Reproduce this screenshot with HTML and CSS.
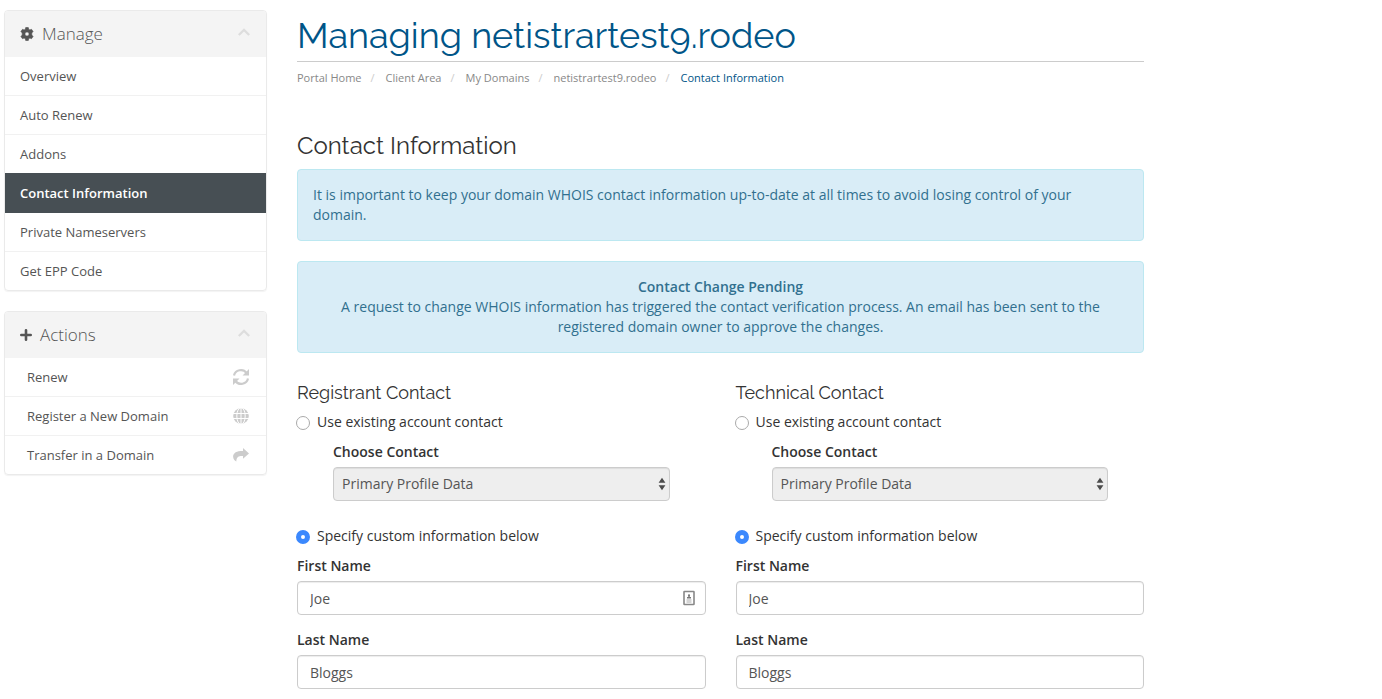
FILE: index.html
```html
<!DOCTYPE html>
<html lang="en">
<head>
<meta charset="utf-8">
<title>Managing netistrartest9.rodeo</title>
<link rel="stylesheet" href="styles.css">
</head>
<body>
<div class="page">
  <aside class="sidebar">
    <section class="panel">
      <h3 class="panel-heading">
        <svg class="panel-icon" width="14" height="14" viewBox="0 0 14 14" aria-hidden="true"><path fill="currentColor" stroke="currentColor" stroke-width=".6" stroke-linejoin="round" fill-rule="evenodd" d="M5.700 .5h2.600l.4 1.700 1.200.7 1.600-.6 1.600 2.300-1.300 1.300v2.200l1.300 1.300-1.600 2.300-1.600-.6-1.200.7-.4 1.700H5.700l-.4-1.700-1.200-.7-1.600.6L.9 9.400l1.300-1.300V5.900L.9 4.600l1.600-2.300 1.600.6 1.200-.7zM7 4.900a2.100 2.100 0 1 0 0 4.200a2.100 2.100 0 0 0 0-4.200z"/></svg>
        <span class="panel-title">Manage</span>
        <svg class="chevron" width="12" height="8" viewBox="0 0 12 8" aria-hidden="true"><path fill="none" stroke="currentColor" stroke-width="2.200" d="M.8 7L6 1.900 11.200 7"/></svg>
      </h3>
      <nav class="menu">
        <a class="item" href="#">Overview</a>
        <a class="item" href="#">Auto Renew</a>
        <a class="item" href="#">Addons</a>
        <a class="item active" href="#">Contact Information</a>
        <a class="item" href="#">Private Nameservers</a>
        <a class="item" href="#">Get EPP Code</a>
      </nav>
    </section>
    <section class="panel">
      <h3 class="panel-heading">
        <svg class="panel-icon" width="12" height="12" viewBox="0 0 12 12" aria-hidden="true"><path fill="none" stroke="currentColor" stroke-width="2.600" stroke-linecap="round" d="M6 1.300v9.400M1.300 6h9.400"/></svg>
        <span class="panel-title">Actions</span>
        <svg class="chevron" width="12" height="8" viewBox="0 0 12 8" aria-hidden="true"><path fill="none" stroke="currentColor" stroke-width="2.200" d="M.8 7L6 1.900 11.200 7"/></svg>
      </h3>
      <nav class="menu actions">
        <a class="item" href="#">Renew
          <svg width="18" height="18" viewBox="0 0 18 18" aria-hidden="true"><g fill="none" stroke="currentColor" stroke-width="2.200"><path d="M2 7.500A7 6.800 0 0 1 14.600 5M16 10.500A7 6.800 0 0 1 3.400 13"/></g><path fill="currentColor" d="M17 1v6.500h-6.500zM1 17v-6.500h6.500z"/></svg></a>
        <a class="item" href="#">Register a New Domain
          <svg width="18" height="18" viewBox="0 0 18 18" aria-hidden="true"><circle cx="9" cy="9" r="7.800" fill="currentColor"/><path fill="none" stroke="#fff" stroke-width="1" d="M1 6.500h16M1 11.500h16M9 1v16"/><ellipse cx="9" cy="9" rx="4.200" ry="8.400" fill="none" stroke="#fff"/></svg></a>
        <a class="item" href="#">Transfer in a Domain
          <svg width="18" height="18" viewBox="0 0 18 18" aria-hidden="true"><path fill="currentColor" d="M11 2l6 5.400-6 5.400V10C7.500 9.700 4.500 10.500 4.300 15.500 2.800 15 1.100 13 1.100 10.600 1.100 6.500 5 4.800 11 4.900z"/></svg></a>
      </nav>
    </section>
  </aside>

  <main class="main">
    <header class="page-header">
      <h1>Managing netistrartest9.rodeo</h1>
      <nav aria-label="Breadcrumb">
        <ol class="breadcrumb">
          <li><a href="#">Portal Home</a></li>
          <li><a href="#">Client Area</a></li>
          <li><a href="#">My Domains</a></li>
          <li><a href="#">netistrartest9.rodeo</a></li>
          <li class="current">Contact Information</li>
        </ol>
      </nav>
    </header>

    <h2>Contact Information</h2>
    <p class="alert">It is important to keep your domain WHOIS contact information up-to-date at all times to avoid losing control of your domain.</p>
    <p class="alert centered"><strong>Contact Change Pending</strong><br>A request to change WHOIS information has triggered the contact verification process. An email has been sent to the registered domain owner to approve the changes.</p>

    <form class="contacts">
      <section class="contact">
        <h3>Registrant Contact</h3>
        <label class="choice"><input type="radio" name="registrant"> Use existing account contact</label>
        <div class="field existing">
          <label for="r-contact">Choose Contact</label>
          <div class="control">
            <select id="r-contact" disabled><option>Primary Profile Data</option></select>
            <svg class="arrows" width="8" height="14" viewBox="0 0 8 14" aria-hidden="true"><path fill="#4c4c4c" d="M4 .8l3.400 5H.6zM4 13.200l3.400-5H.6z"/></svg>
          </div>
        </div>
        <label class="choice"><input type="radio" name="registrant" checked> Specify custom information below</label>
        <div class="field">
          <label for="r-first">First Name</label>
          <div class="control">
            <input class="text" id="r-first" type="text" value="Joe">
            <svg class="card" width="12" height="16" viewBox="0 0 12 16" aria-hidden="true"><rect x="1" y="1.500" width="10" height="13" rx=".5" fill="#fff" stroke="#888" stroke-width="1.600"/><circle cx="6" cy="5.300" r="1.100" fill="#777"/><path fill="#777" d="M5.300 6h1.400v1H8v1.500H4V7h1.300z"/><path stroke="#aaa" d="M3.500 10h5M3.500 12h5"/></svg>
          </div>
        </div>
        <div class="field">
          <label for="r-last">Last Name</label>
          <input class="text" id="r-last" type="text" value="Bloggs">
        </div>
      </section>
      <section class="contact">
        <h3>Technical Contact</h3>
        <label class="choice"><input type="radio" name="technical"> Use existing account contact</label>
        <div class="field existing">
          <label for="t-contact">Choose Contact</label>
          <div class="control">
            <select id="t-contact" disabled><option>Primary Profile Data</option></select>
            <svg class="arrows" width="8" height="14" viewBox="0 0 8 14" aria-hidden="true"><path fill="#4c4c4c" d="M4 .8l3.400 5H.6zM4 13.200l3.400-5H.6z"/></svg>
          </div>
        </div>
        <label class="choice"><input type="radio" name="technical" checked> Specify custom information below</label>
        <div class="field">
          <label for="t-first">First Name</label>
          <input class="text" id="t-first" type="text" value="Joe">
        </div>
        <div class="field">
          <label for="t-last">Last Name</label>
          <input class="text" id="t-last" type="text" value="Bloggs">
        </div>
      </section>
    </form>
  </main>
</div>
</body>
</html>
```
FILE: styles.css
```css
* { box-sizing: border-box; }

body {
  margin: 0;
  background: #fff;
  color: #333;
  font: 14px/20px "Open Sans", "Noto Sans", sans-serif;
}

a { color: inherit; text-decoration: none; }

h1, h2, h3, p, ol { margin: 0; padding: 0; }

h1, h2, .contact h3 {
  font-family: Raleway, Lato, sans-serif;
  font-weight: 400;
}

.page {
  display: flex;
  gap: 30px;
  max-width: 1148px;
  padding: 10px 4px;
}

/* Sidebar */
.sidebar {
  display: flex;
  flex: 0 0 263px;
  flex-direction: column;
  gap: 20px;
}

.panel {
  overflow: hidden;
  border: 1px solid #eaeaea;
  border-radius: 4px;
  box-shadow: 0 1px 1px rgba(0, 0, 0, .05);
  color: #555;
}

.panel-heading {
  display: flex;
  align-items: center;
  height: 46px;
  padding: 0 16px 0 15px;
  background: #f4f4f4;
  font-size: 17px;
  font-weight: 300;
}

.panel-icon { margin-right: 8px; }
.panel-title { flex: 1; }
.chevron { color: #ddd; margin-bottom: 4px; }

.item {
  display: flex;
  align-items: center;
  justify-content: space-between;
  height: 39px;
  padding: 0 15px;
  border-bottom: 1px solid #f1f1f1;
  font-size: 13px;
}

.item:last-child { border-bottom: 0; height: 38px; }

.item.active {
  height: 40px;
  margin-top: -1px;
  border-color: #474f54;
  background: #474f54;
  color: #fff;
  font-weight: 600;
}

.actions .item { padding: 0 16px 0 22px; }
.actions svg { color: #ccc; }

/* Page header */
.page-header { padding-bottom: 44px; }

h1 {
  height: 52px;
  border-bottom: 1px solid #ccc;
  color: #058;
  font-size: 36px;
  line-height: 50px;
}

.breadcrumb {
  display: flex;
  padding-top: 6px;
  color: #888;
  font-size: 11px;
  list-style: none;
}

.breadcrumb li + li::before {
  padding: 0 11px 0 9px;
  color: #ccc;
  content: "/";
}

.breadcrumb .current { color: #058; }

.main { flex: 1; min-width: 0; }

h2 {
  margin-bottom: 10px;
  font-size: 24px;
  line-height: 27px;
}

.alert {
  margin-bottom: 20px;
  padding: 15px;
  border: 1px solid #bce8f1;
  border-radius: 4px;
  background: #d9edf7;
  color: #31708f;
}

.centered { text-align: center; }

strong { font-weight: 600; }

/* Contact forms */
.contacts {
  display: grid;
  grid-template-columns: 1fr 1fr;
  gap: 30px;
  padding-top: 10px;
}

.contact h3 {
  margin-bottom: 9px;
  font-size: 18px;
  line-height: 20px;
}

.choice {
  display: flex;
  align-items: center;
  gap: 7px;
  margin: 0 0 10px -1px;
}

.choice input {
  width: 14px;
  height: 14px;
  margin: 2px 0 0;
  border: 1px solid #aaa;
  border-radius: 50%;
  appearance: none;
}

.choice input:checked { border: 5px solid #3b88fd; }

.field { margin-bottom: 15px; }

.existing {
  margin-bottom: 25px;
  padding: 0 36px;
}

.field label {
  display: block;
  margin-bottom: 5px;
  font-weight: 600;
}

.control { position: relative; }

.text,
select {
  display: block;
  width: 100%;
  height: 34px;
  padding: 0 12px;
  border: 1px solid #ccc;
  border-radius: 4px;
  background: #fff;
  box-shadow: inset 0 1px 1px rgba(0, 0, 0, .075);
  color: #555;
  font: inherit;
  appearance: none;
}

select {
  padding: 0 8px;
  background: #eee;
  opacity: 1;
}

.arrows {
  position: absolute;
  top: 10px;
  right: 4px;
}

.card {
  position: absolute;
  top: 9px;
  right: 11px;
}
```
